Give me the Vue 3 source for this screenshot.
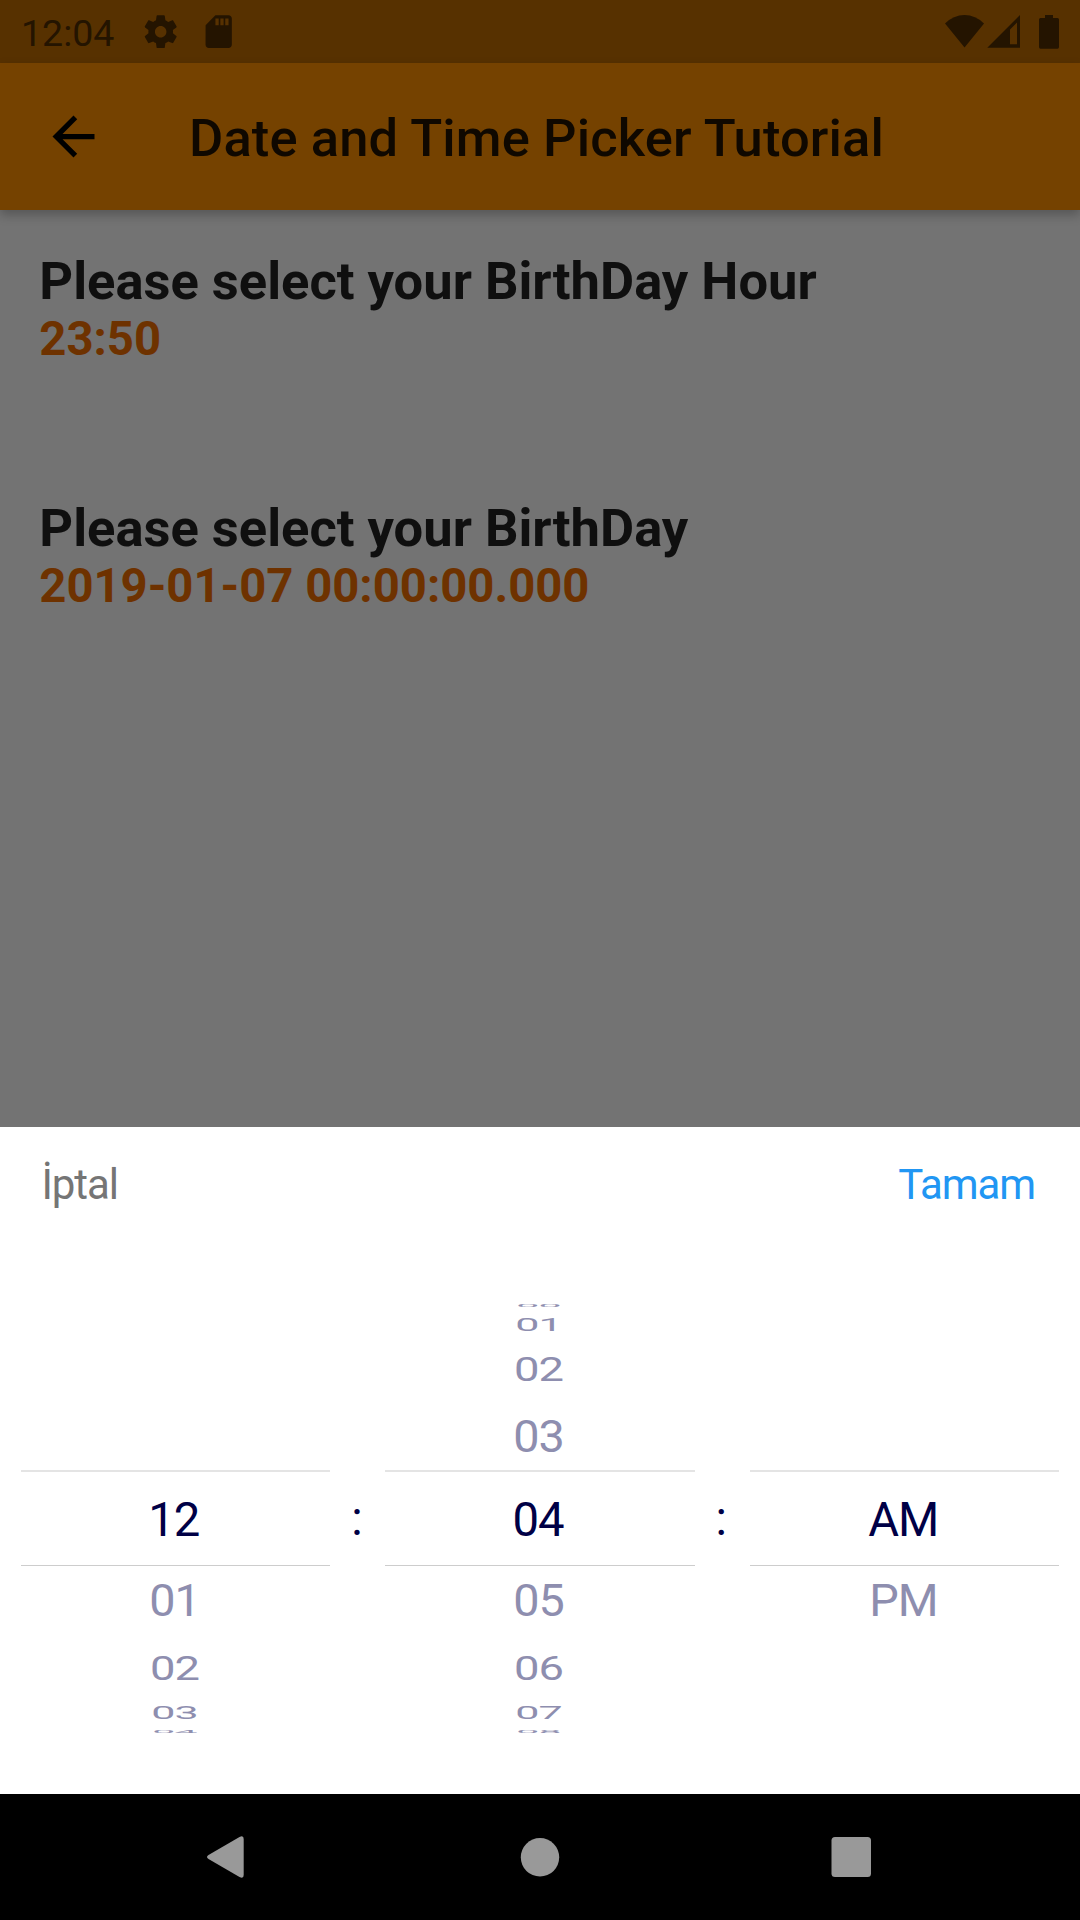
<script setup>
const wheels = [
  { name: 'hour', above: [], selected: '12', below: ['01', '02', '03', '04'] },
  { name: 'minute', above: ['00', '01', '02', '03'], selected: '04', below: ['05', '06', '07', '08'] },
  { name: 'period', above: [], selected: 'AM', below: ['PM'] },
]
</script>

<template>
  <div class="screen">
    <header class="status">
      <span class="clock">12:04</span>
      <svg class="gear" viewBox="0 0 24 24"><path d="M19.43 12.98c.04-.32.07-.64.07-.98s-.03-.66-.07-.98l2.11-1.65c.19-.15.24-.42.12-.64l-2-3.46c-.12-.22-.39-.3-.61-.22l-2.49 1c-.52-.4-1.08-.73-1.69-.98l-.38-2.65C14.46 2.18 14.25 2 14 2h-4c-.25 0-.46.18-.49.42l-.38 2.65c-.61.25-1.17.59-1.69.98l-2.49-1c-.23-.09-.49 0-.61.22l-2 3.46c-.13.22-.07.49.12.64l2.11 1.65c-.04.32-.07.65-.07.98s.03.66.07.98l-2.11 1.65c-.19.15-.24.42-.12.64l2 3.46c.12.22.39.3.61.22l2.49-1c.52.4 1.08.73 1.69.98l.38 2.65c.03.24.24.42.49.42h4c.25 0 .46-.18.49-.42l.38-2.65c.61-.25 1.17-.59 1.69-.98l2.49 1c.23.09.49 0 .61-.22l2-3.46c.12-.22.07-.49-.12-.64l-2.11-1.65zM12 15.5c-1.93 0-3.5-1.57-3.5-3.5s1.57-3.5 3.5-3.5 3.5 1.57 3.5 3.5-1.57 3.5-3.5 3.5z" /></svg>
      <svg class="card" viewBox="0 0 24 24"><path d="M18 2h-8L4.02 8 4 20c0 1.1.9 2 2 2h12c1.1 0 2-.9 2-2V4c0-1.1-.9-2-2-2zm-6 6h-2V4h2v4zm3 0h-2V4h2v4zm3 0h-2V4h2v4z" /></svg>
      <svg class="signals" viewBox="0 0 120 36">
        <path d="M0 9.5Q8.500 1 19.500 1T39 9.500L19.500 33.500Z" />
        <path fill-rule="evenodd" d="M42.300 33.700L75 1V33.700ZM65 30.300H72V8.500L65 15.500Z" />
        <path d="M100 1H108V4H112.500Q114 4 114 5.500V33Q114 34.700 112.500 34.700H95.500Q94 34.700 94 33V5.500Q94 4 95.500 4H100Z" />
      </svg>
    </header>

    <div class="appbar">
      <svg class="back" viewBox="0 0 24 24"><path d="M20 11H7.830l5.590-5.590L12 4l-8 8 8 8 1.410-1.410L7.830 13H20v-2z" /></svg>
      <h1>Date and Time Picker Tutorial</h1>
    </div>

    <main>
      <section>
        <h2>Please select your BirthDay Hour</h2>
        <p>23:50</p>
      </section>
      <section>
        <h2>Please select your BirthDay</h2>
        <p>2019-01-07 00:00:00.000</p>
      </section>
    </main>

    <div class="sheet">
      <div class="actions">
        <span class="cancel">İptal</span>
        <span class="done">Tamam</span>
      </div>
      <div class="picker">
        <template v-for="(w, i) in wheels" :key="w.name">
          <div v-if="i" class="colon">:</div>
          <div class="wheel" :class="w.name">
            <div class="above">
              <div v-for="(t, k) in w.above" :key="t" class="item" :class="'up' + (4 - k)"><span>{{ t }}</span></div>
            </div>
            <div class="selected">{{ w.selected }}</div>
            <div class="below">
              <div v-for="(t, k) in w.below" :key="t" class="item" :class="'down' + (k + 1)"><span>{{ t }}</span></div>
            </div>
          </div>
        </template>
      </div>
    </div>

    <nav>
      <svg viewBox="0 0 1080 126">
        <path d="M208.500 61L239.500 43Q243.700 41 243.700 45V81Q243.700 85 239.500 83L208.500 65Q205.500 63 208.500 61Z" />
        <circle cx="540" cy="63.300" r="19.200" />
        <rect x="831.500" y="43" width="39.500" height="40" rx="3.500" />
      </svg>
    </nav>
  </div>
</template>

<style>
body {
  margin: 0;
}
</style>

<style scoped>
.screen {
  width: 1080px;
  height: 1920px;
  display: flex;
  flex-direction: column;
  overflow: hidden;
  background: #737373;
  font-family: Roboto, "Liberation Sans", sans-serif;
}
.status {
  height: 63px;
  flex: none;
  box-sizing: border-box;
  padding-left: 21px;
  display: flex;
  align-items: center;
  background: #573100;
  color: #241400;
  fill: #241400;
}
.clock {
  width: 120px;
  font-size: 37.5px;
  line-height: 44px;
  padding-top: 3px;
}
.gear,
.card {
  width: 39.4px;
  height: 39.4px;
}
.card {
  margin-left: 18.4px;
}
.signals {
  width: 120px;
  height: 36px;
  margin: 0 15px 0 auto;
}
.appbar {
  position: relative;
  height: 147px;
  flex: none;
  display: flex;
  align-items: center;
  background: #754200;
  box-shadow: 0 5px 10px rgba(0, 0, 0, 0.25);
}
.back {
  width: 63px;
  height: 63px;
  margin-left: 42px;
}
h1 {
  margin: 2px 0 0 84px;
  font-size: 52.5px;
  font-weight: 500;
  line-height: 62px;
  letter-spacing: 0.12px;
  color: #0f0800;
  white-space: nowrap;
}
main {
  height: 917px;
  flex: none;
  box-sizing: border-box;
  padding: 40px 39.3px 0;
}
section {
  height: 247px;
}
h2,
p {
  margin: 0;
  font-weight: 700;
  white-space: nowrap;
}
h2 {
  font-size: 52.5px;
  line-height: 62px;
  color: #0f0f0f;
}
p {
  font-size: 47.25px;
  line-height: 55px;
  color: #6e3200;
}
.sheet {
  height: 667px;
  flex: none;
  background: #fff;
}
.actions {
  height: 115px;
  box-sizing: border-box;
  padding: 0 45px 0 41.5px;
  display: flex;
  justify-content: space-between;
  align-items: center;
  font-size: 42px;
  letter-spacing: -1.08px;
}
.cancel {
  color: #757575;
}
.done {
  color: #2196f3;
}
.picker {
  height: 552px;
  padding: 0 21px;
  display: flex;
  font-size: 47.25px;
  letter-spacing: -1.08px;
  color: #000046;
}
.wheel {
  flex: 1;
  display: flex;
  flex-direction: column;
  text-align: center;
}
.above {
  height: 228px;
  display: flex;
  flex-direction: column;
  justify-content: flex-end;
}
.selected {
  height: 93px;
  line-height: 96px;
  padding-right: 4px;
  border-top: 2px solid #e4e4e4;
  border-bottom: 1px solid #cdcdcd;
}
.period .selected {
  padding-right: 2px;
}
.colon {
  width: 52px;
  padding-right: 3px;
  line-height: 554px;
  text-align: center;
}
.item {
  display: flex;
  align-items: center;
  justify-content: center;
  padding-right: 2.5px;
  color: #8e8eaf;
}
.item span {
  line-height: 56px;
  flex: none;
}
.up4 { height: 17px; }
.up3 { height: 21px; }
.up2 { height: 69px; }
.up1 { height: 66px; }
.down1 { height: 70px; }
.down2 { height: 65px; }
.down3 { height: 24px; }
.down4 { height: 14px; }
.up4 span,
.down4 span { transform: scale(0.87, 0.09); }
.up3 span,
.down3 span { transform: scale(0.91, 0.385); }
.up2 span,
.down2 span { transform: scale(0.96, 0.7); }
.up1 span,
.down1 span { transform: scale(0.99, 0.92); }
nav {
  height: 126px;
  flex: none;
  background: #000;
  fill: #999;
}
nav svg {
  display: block;
  width: 1080px;
  height: 126px;
}
</style>
